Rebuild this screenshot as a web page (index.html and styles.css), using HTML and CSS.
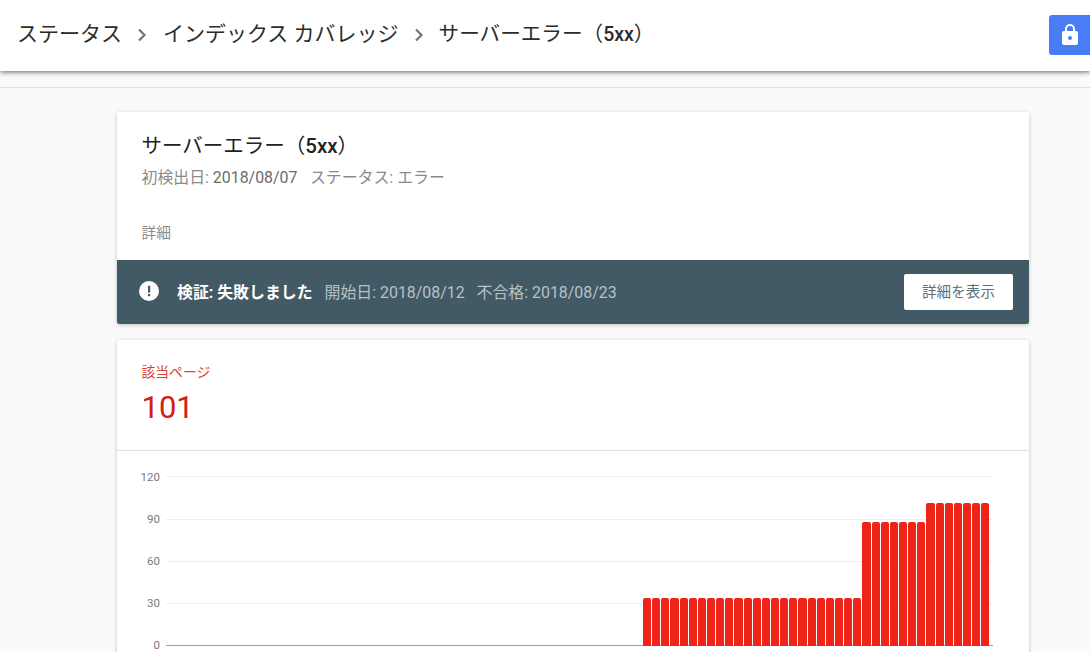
FILE: index.html
```html
<!DOCTYPE html>
<html lang="ja">
<head>
<meta charset="utf-8">
<title>サーバーエラー（5xx）</title>
<link rel="stylesheet" href="styles.css">
</head>
<body>
<header class="topbar">
  <nav class="crumbs">
    <span>ステータス</span>
    <svg class="chev" viewBox="0 0 10 14"><path d="M2 1.5 7.5 7 2 12.5" fill="none" stroke="#757575" stroke-width="2.2"/></svg>
    <span>インデックス カバレッジ</span>
    <svg class="chev" viewBox="0 0 10 14"><path d="M2 1.5 7.5 7 2 12.5" fill="none" stroke="#757575" stroke-width="2.2"/></svg>
    <span class="current">サーバーエラー（<b class="num">5xx</b>）</span>
  </nav>
  <button class="lock" aria-label="lock">
    <svg viewBox="0 0 24 24" width="24" height="24"><path fill="#fff" d="M18 8h-1V6a5 5 0 0 0-10 0v2H6a2 2 0 0 0-2 2v10a2 2 0 0 0 2 2h12a2 2 0 0 0 2-2V10a2 2 0 0 0-2-2zM9 6a3 3 0 0 1 6 0v2H9V6zm3 11a2 2 0 1 1 0-4 2 2 0 0 1 0 4z"/></svg>
  </button>
</header>
<div class="rule"></div>
<main class="content">
  <section class="card">
    <div class="summary">
      <h1 class="title">サーバーエラー（<b class="num">5xx</b>）</h1>
      <p class="meta">初検出日: <span class="dark">2018/08/07</span><span class="status">ステータス: エラー</span></p>
      <p class="detail">詳細</p>
    </div>
    <div class="banner">
      <svg class="alert" viewBox="0 0 20 20" width="20" height="20"><circle cx="10" cy="10" r="10" fill="#fff"/><rect x="9" y="4.8" width="2.2" height="6.8" fill="#425a65"/><rect x="9" y="13" width="2.2" height="2.2" fill="#425a65"/></svg>
      <strong class="verdict">検証: 失敗しました</strong>
      <span class="bmeta">開始日: 2018/08/12</span>
      <span class="bmeta">不合格: 2018/08/23</span>
      <button class="show">詳細を表示</button>
    </div>
  </section>
  <section class="card pages">
    <div class="count">
      <div class="label">該当ページ</div>
      <div class="value">101</div>
    </div>
    <div class="chart">
      <div class="axis">
        <span>120</span><span>90</span><span>60</span><span>30</span><span>0</span>
      </div>
      <div class="plot">
        <i class="grid g0"></i><i class="grid g1"></i><i class="grid g2"></i><i class="grid g3"></i><i class="base"></i>
        <div class="bars">
          <i class="bar h33"></i><i class="bar h33"></i><i class="bar h33"></i><i class="bar h33"></i><i class="bar h33"></i><i class="bar h33"></i>
          <i class="bar h33"></i><i class="bar h33"></i><i class="bar h33"></i><i class="bar h33"></i><i class="bar h33"></i><i class="bar h33"></i>
          <i class="bar h33"></i><i class="bar h33"></i><i class="bar h33"></i><i class="bar h33"></i><i class="bar h33"></i><i class="bar h33"></i>
          <i class="bar h33"></i><i class="bar h33"></i><i class="bar h33"></i><i class="bar h33"></i><i class="bar h33"></i><i class="bar h33"></i>
          <i class="bar h88"></i><i class="bar h88"></i><i class="bar h88"></i><i class="bar h88"></i><i class="bar h88"></i><i class="bar h88"></i><i class="bar h88"></i>
          <i class="bar h101"></i><i class="bar h101"></i><i class="bar h101"></i><i class="bar h101"></i><i class="bar h101"></i><i class="bar h101"></i><i class="bar h101"></i>
        </div>
      </div>
    </div>
  </section>
</main>
</body>
</html>
```
FILE: styles.css
```css
* { box-sizing: border-box; }
html, body { margin: 0; height: 652px; overflow: hidden; }
body {
  background: #fafafa;
  font-family: Roboto, "Noto Sans CJK JP", sans-serif;
  color: #212121;
}
.topbar {
  height: 71px;
  background: #fff;
  box-shadow: 0 1px 5px rgba(0,0,0,.6);
  display: flex;
  align-items: center;
  justify-content: space-between;
  padding-left: 17px;
  position: relative;
}
.crumbs {
  display: flex;
  align-items: center;
  font-size: 21px;
  line-height: 28px;
  margin-top: -4px;
  color: #2b2b2b;
}
.chev { width: 10px; height: 14px; margin: 2px 16px 0 15px; }
.current { font-size: 20.6px; margin: 1px 0 0 -1px; }
.num { font-weight: 500; }
.current .num { font-size: 19.5px; }
.lock {
  width: 41px;
  height: 40px;
  margin-top: -2px;
  border: 0;
  padding: 0;
  border-radius: 3px 0 0 3px;
  background: #4a7cf6;
  display: flex;
  align-items: center;
  justify-content: center;
}
.rule { height: 17px; border-bottom: 1px solid #e0e0e0; }
.content { padding: 24px 61px 0 117px; display: flex; flex-direction: column; gap: 16px; }
.card {
  background: #fff;
  border-radius: 2px;
  box-shadow: 0 1px 4px rgba(0,0,0,.22);
}
.summary { height: 148px; padding: 20px 24.5px 0; }
.title { margin: 0; font-size: 20.5px; line-height: 28px; font-weight: 400; color: #212121; }
.meta { margin: 8px 0 0; font-size: 15.9px; line-height: 20px; color: #8a8a8a; }
.dark { color: #6b6b6b; }
.status { margin-left: 12.5px; }
.detail { margin: 35px 0 0; font-size: 14.7px; line-height: 20px; color: #8a8a8a; }
.banner {
  height: 64px;
  background: #425a65;
  display: flex;
  align-items: center;
  padding: 0 16px 2px 22px;
  font-size: 15.9px;
  color: #b6c2c8;
  border-radius: 0 0 2px 2px;
}
.verdict { margin-left: 18px; color: #fff; font-weight: 700; }
.bmeta { margin-left: 12px; }
.show {
  margin: 2px 0 0 auto;
  width: 109px;
  height: 36px;
  border: 0;
  border-radius: 2px;
  background: #fff;
  color: #5f6f78;
  padding: 0 0 3px;
  font: 14.6px Roboto, "Noto Sans CJK JP", sans-serif;
}
.pages { height: 400px; }
.count { height: 111px; padding: 23px 24.5px 0; border-bottom: 1px solid #e0e0e0; }
.label { font-size: 13.8px; line-height: 18px; color: #d2453a; }
.value { font-size: 31px; line-height: 40px; margin-top: 7px; color: #cf2011; }
.chart { display: flex; padding: 25px 36px 0 0; height: 220px; }
.axis {
  width: 49px;
  height: 170px;
  display: flex;
  flex-direction: column;
  justify-content: space-between;
  align-items: flex-end;
  font-size: 11.5px;
  line-height: 2px;
  color: #7a7a7a;
  padding-right: 6px;
}
.plot { position: relative; flex: 1; height: 170px; }
.grid, .base { position: absolute; left: 0; right: 0; height: 1px; background: #eceff1; }
.g0 { top: 0; }
.g1 { top: 43px; }
.g2 { top: 85px; }
.g3 { top: 127px; }
.base { top: 169px; background: #9e9e9e; }
.bars {
  position: absolute;
  left: 477px;
  bottom: 0;
  height: 170px;
  width: 346.5px;
  display: flex;
  align-items: flex-end;
  gap: 1px;
}
.bar { flex: 1; background: #ee2419; border-radius: 2px 2px 0 0; }
.h33 { height: 48px; }
.h88 { height: 124px; }
.h101 { height: 143px; }
```
